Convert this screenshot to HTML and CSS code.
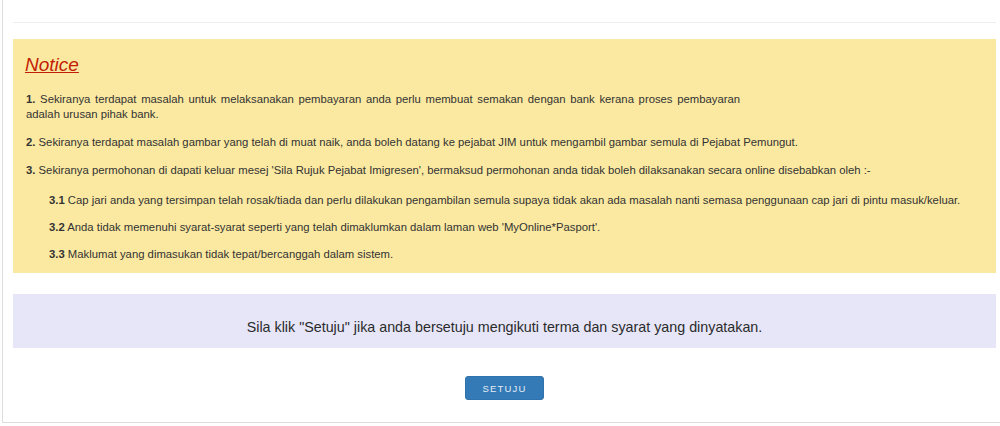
FILE: index.html
```html
<!DOCTYPE html>
<html lang="en">
<head>
    <meta charset="UTF-8">
    <meta name="viewport" content="width=device-width, initial-scale=1.0">
    <title>Notice</title>
    <link rel="stylesheet" href="styles.css">
</head>
<body>
    <div id="panel">
        <div class="rule"></div>

        <!-- notice box -->
        <div class="notice">
            <h3 class="notice-title">Notice</h3>
            <p class="first">
                <span class="line"><b>1.</b> Sekiranya terdapat masalah untuk melaksanakan pembayaran anda perlu membuat semakan dengan bank kerana proses pembayaran</span>
                <span class="line-end">adalah urusan pihak bank.</span>
            </p>
            <p><b>2.</b> Sekiranya terdapat masalah gambar yang telah di muat naik, anda boleh datang ke pejabat JIM untuk mengambil gambar semula di Pejabat Pemungut.</p>
            <p class="three"><b>3.</b> Sekiranya permohonan di dapati keluar mesej 'Sila Rujuk Pejabat Imigresen', bermaksud permohonan anda tidak boleh dilaksanakan secara online disebabkan oleh :-</p>
            <div class="sub">
                <p><b>3.1</b> Cap jari anda yang tersimpan telah rosak/tiada dan perlu dilakukan pengambilan semula supaya tidak akan ada masalah nanti semasa penggunaan cap jari di pintu masuk/keluar.</p>
                <p><b>3.2</b> Anda tidak memenuhi syarat-syarat seperti yang telah dimaklumkan dalam laman web 'MyOnline*Pasport'.</p>
                <p class="last"><b>3.3</b> Maklumat yang dimasukan tidak tepat/bercanggah dalam sistem.</p>
            </div>
        </div>

        <div class="agree">
            Sila klik "Setuju" jika anda bersetuju mengikuti terma dan syarat yang dinyatakan.
        </div>

        <div class="actions">
            <button type="button" class="btn">SETUJU</button>
        </div>
    </div>
</body>
</html>
```

FILE: styles.css
```css
body {
    margin: 0;
    padding: 0;
    font-family: 'Liberation Sans', Arial, sans-serif;
    color: #333;
    background: #fff;
    overflow: hidden;
}

#panel {
    margin-left: 2px;
    width: 983px;
    padding: 22px 5px 22px 10px;
    border-left: 1px solid #ddd;
    border-bottom: 1px solid #ddd;
}

.rule {
    border-top: 1px solid #eee;
    margin-bottom: 16px;
}

/* yellow notice box */
.notice {
    background-color: #fbe9a1;
    padding: 15px 13px 11px 13px;
    font-size: 11.3px;
}

.notice-title {
    margin: 0 0 16px -1px;
    font-size: 19px;
    line-height: 22px;
    font-weight: normal;
    font-style: italic;
    text-decoration: underline;
    color: #c31d05;
}

.notice p {
    margin: 0 0 13px 0;
    line-height: 15px;
}

/* first item: stretched line then a short one */
.notice p.first .line {
    display: block;
    width: 714px;
    text-align: justify;
    text-align-last: justify;
}

.notice p.first .line-end {
    display: block;
}

.notice p.three {
    margin-bottom: 15px;
}

.sub {
    padding-left: 23px;
}

.sub p {
    margin-bottom: 12px;
}

.notice p.last {
    margin-bottom: 0;
}

/* agree message */
.agree {
    margin-top: 21px;
    background-color: #e6e6f8;
    padding: 23px 10px 11px;
    text-align: center;
    font-size: 14.3px;
    line-height: 20px;
    color: #2b2b2b;
}

.actions {
    text-align: center;
    padding-top: 28px;
}

.btn {
    width: 79px;
    height: 24px;
    background-color: #337ab7;
    color: #e6edf5;
    font-family: 'Liberation Sans', Arial, sans-serif;
    font-size: 9.5px;
    letter-spacing: 1.2px;
    border: 1px solid #3072ad;
    border-radius: 3px;
    padding: 0;
    cursor: pointer;
}
```
